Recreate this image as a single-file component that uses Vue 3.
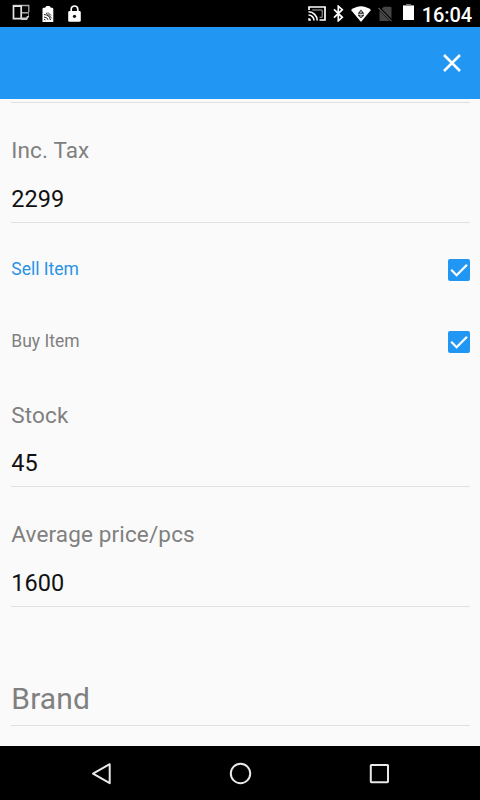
<template>
  <div class="screen">
    <div class="status-bar">
      <div class="status-left">
        <svg class="icon-screens" width="18" height="18" viewBox="0 0 18 18">
          <path d="M.8 1.5H16.8V8" fill="none" stroke="#aaa" stroke-width="1.3" />
          <path d="M1.5 2.2H9.2V14.6H1.5Z" fill="none" stroke="#e4e4e4" stroke-width="1.7" />
          <path d="M10 8.8H17" fill="none" stroke="#aaa" stroke-width="1.5" />
          <path d="M16.5 9V12.5" fill="none" stroke="#777" stroke-width="1" />
          <path d="M9 13.6H14.2L15 12H17.4L15 16H9Z" fill="#ccc" />
        </svg>
        <svg class="icon-card" width="12" height="16" viewBox="0 0 12 16">
          <path d="M3 1.8L4.5 0H7.5L9 1.8H10Q11.3 1.8 11.3 3V16H.5V3Q.5 1.8 2 1.8Z" fill="#fff" />
          <path d="M2 8.5Q7.5 9 8.5 14M2 11Q5.5 11.3 6.2 14M2 13.3L3.5 14M4 6.8L9.7 12M6 6.5L9 9.5" fill="none" stroke="#222" stroke-width="1" />
        </svg>
        <svg class="icon-lock" width="13" height="17" viewBox="0 0 13 17">
          <path d="M3.2 7V4.3A3.3 3.3 0 0 1 9.8 4.3V7" fill="none" stroke="#fff" stroke-width="1.7" />
          <rect x=".2" y="6" width="12.6" height="10.8" rx="1.4" fill="#fff" />
          <circle cx="6.5" cy="11.3" r="1.6" fill="#111" />
        </svg>
      </div>
      <div class="status-right">
        <svg class="icon-cast" width="18" height="15" viewBox="0 0 18 15">
          <path d="M1 4V1H17V14H11.5" fill="none" stroke="#fff" stroke-width="1.7" />
          <path d="M4.2 4H14.2V11.3H11.5" fill="none" stroke="#aaa" stroke-width="1" />
          <path d="M.5 5.8A8.7 8.7 0 0 1 9.2 14.5M.5 9A5.5 5.5 0 0 1 6 14.5" fill="none" stroke="#fff" stroke-width="1.6" />
          <path d="M.3 12A2.7 2.7 0 0 1 3 14.7H.3Z" fill="#fff" />
        </svg>
        <svg class="icon-bluetooth" width="11" height="17" viewBox="0 0 11 17">
          <path d="M1 4.3L9.3 12.3L5.3 15.8V1.2L9.3 4.7L1 12.7" fill="none" stroke="#fff" stroke-width="1.7" />
        </svg>
        <svg class="icon-wifi" width="20" height="16" viewBox="0 0 20 16">
          <path d="M0 4Q10-3.5 20 4L10 16Z" fill="#fff" />
          <path d="M7 7.3L10 3.5L13 7.3V9.5L10 12.3L7 9.5Z" fill="#222" />
          <path d="M8.8 6.6L10 5L11.2 6.6ZM7.2 7.7H12.8V8.7H7.2ZM8.7 9.6H11.3L10 10.9Z" fill="#fff" />
        </svg>
        <svg class="icon-nosim" width="15" height="16" viewBox="0 0 15 16">
          <path d="M5.8 .8H12.5Q13.5 .8 13.5 2V15H1.5V5Z" fill="#454545" />
          <path d="M.3 1.2L14.2 15.4" stroke="#000" stroke-width="2.8" />
          <path d="M.5 2L13.5 15.2" stroke="#555" stroke-width="1.2" />
        </svg>
        <svg class="icon-battery" width="11" height="16" viewBox="0 0 11 16">
          <path d="M0 1.4H11V16H0Z" fill="#fff" />
          <path d="M3 0H8V1.4H3Z" fill="#777" />
        </svg>
        <span class="clock">16:04</span>
      </div>
    </div>

    <div class="app-bar">
      <svg class="close" width="18" height="18" viewBox="0 0 18 18">
        <path d="M1 1L17 17M17 1L1 17" fill="none" stroke="#fff" stroke-width="2.5" />
      </svg>
    </div>

    <div class="form">
      <div class="rule"></div>
      <template v-for="item in items" :key="item.label">
        <div v-if="item.type === 'check'" class="check-row" @click="item.checked = !item.checked">
          <span class="check-label" :class="{ active: item.active }">{{ item.label }}</span>
          <span class="checkbox" :class="{ checked: item.checked }">
            <svg v-if="item.checked" width="22" height="22" viewBox="0 0 22 22">
              <path d="M3.2 10.8L8.6 16.2L19 5.8" fill="none" stroke="#fff" stroke-width="2.3" />
            </svg>
          </span>
        </div>
        <div v-else class="field" :class="{ empty: !item.value }">
          <span class="field-label">{{ item.label }}</span>
          <span v-if="item.value" class="field-value">{{ item.value }}</span>
        </div>
      </template>
    </div>

    <div class="nav-bar">
      <svg width="24" height="24" viewBox="0 0 24 24">
        <path d="M20.7 2.2V21.2L4 11.7Z" />
      </svg>
      <svg width="24" height="24" viewBox="0 0 24 24">
        <circle cx="12.5" cy="11.5" r="9.7" />
      </svg>
      <svg width="24" height="24" viewBox="0 0 24 24">
        <rect x="3.8" y="3" width="17.2" height="17.2" rx=".6" />
      </svg>
    </div>
  </div>
</template>

<script setup>
import { ref } from 'vue'

const items = ref([
  { type: 'field', label: 'Inc. Tax', value: '2299' },
  { type: 'check', label: 'Sell Item', checked: true, active: true },
  { type: 'check', label: 'Buy Item', checked: true, active: false },
  { type: 'field', label: 'Stock', value: '45' },
  { type: 'field', label: 'Average price/pcs', value: '1600' },
  { type: 'field', label: 'Brand', value: '' }
])
</script>

<style>
body {
  margin: 0;
  background: #fafafa;
}
</style>

<style scoped>
.screen {
  width: 480px;
  height: 800px;
  display: flex;
  flex-direction: column;
  background: #fafafa;
  font-family: Roboto, "Liberation Sans", sans-serif;
  overflow: hidden;
}

svg {
  display: block;
  flex-shrink: 0;
}

.status-bar {
  height: 27px;
  flex-shrink: 0;
  display: flex;
  justify-content: space-between;
  background: #000;
}

.status-left,
.status-right {
  display: flex;
  align-items: flex-start;
}

.icon-screens {
  margin: 4px 0 0 12px;
}

.icon-card {
  margin: 6px 0 0 12px;
}

.icon-lock {
  margin: 5px 0 0 14px;
}

.icon-cast {
  margin-top: 6px;
}

.icon-bluetooth {
  margin: 5px 0 0 7px;
}

.icon-wifi {
  margin: 6px 0 0 7px;
}

.icon-nosim {
  margin: 6px 0 0 7px;
}

.icon-battery {
  margin: 4px 0 0 10px;
}

.clock {
  margin: 3px 8px 0 8px;
  font-size: 20px;
  font-weight: 500;
  line-height: 24px;
  letter-spacing: -0.1px;
  color: #fff;
}

.app-bar {
  height: 72px;
  flex-shrink: 0;
  display: flex;
  align-items: center;
  justify-content: flex-end;
  padding-right: 19px;
  box-sizing: border-box;
  background: #2196f3;
}

.form {
  flex: 1;
  padding: 0 10px 0 11px;
  overflow: hidden;
}

.rule {
  height: 4px;
  box-sizing: border-box;
  border-bottom: 1px solid #e0e0e0;
}

.field {
  height: 120px;
  box-sizing: border-box;
  display: flex;
  flex-direction: column;
  padding-left: 0.3px;
  border-bottom: 1px solid #e0e0e0;
}

.field-label {
  margin-top: 33px;
  font-size: 22.5px;
  line-height: 28px;
  letter-spacing: 0.14px;
  color: #808080;
}

.check-row + .field .field-label {
  margin: 34px 0 -1px;
}

.field-value {
  margin-top: 20px;
  font-size: 23.5px;
  line-height: 30px;
  color: #111;
}

.field.empty {
  height: 119px;
}

.field.empty .field-label {
  margin-top: 74px;
  font-size: 30px;
  line-height: 36px;
}

.check-row {
  height: 72px;
  box-sizing: border-box;
  padding-top: 34px;
  display: flex;
  align-items: flex-start;
  justify-content: space-between;
}

.check-label {
  padding-left: 0.3px;
  font-size: 17.5px;
  line-height: 24px;
  color: #808080;
}

.check-label.active {
  color: #2b93e6;
}

.checkbox {
  width: 22px;
  height: 22px;
  margin-top: 2px;
  border-radius: 2px;
  box-shadow: inset 0 0 0 2px #757575;
}

.checkbox.checked {
  background: #2196f3;
  box-shadow: none;
}

.nav-bar {
  height: 54px;
  flex-shrink: 0;
  display: flex;
  justify-content: center;
  align-items: center;
  gap: 115px;
  padding-top: 1px;
  box-sizing: border-box;
  background: #000;
}

.nav-bar svg path,
.nav-bar svg circle,
.nav-bar svg rect {
  fill: none;
  stroke: #e8e8e8;
  stroke-width: 2;
  stroke-linejoin: round;
}
</style>
